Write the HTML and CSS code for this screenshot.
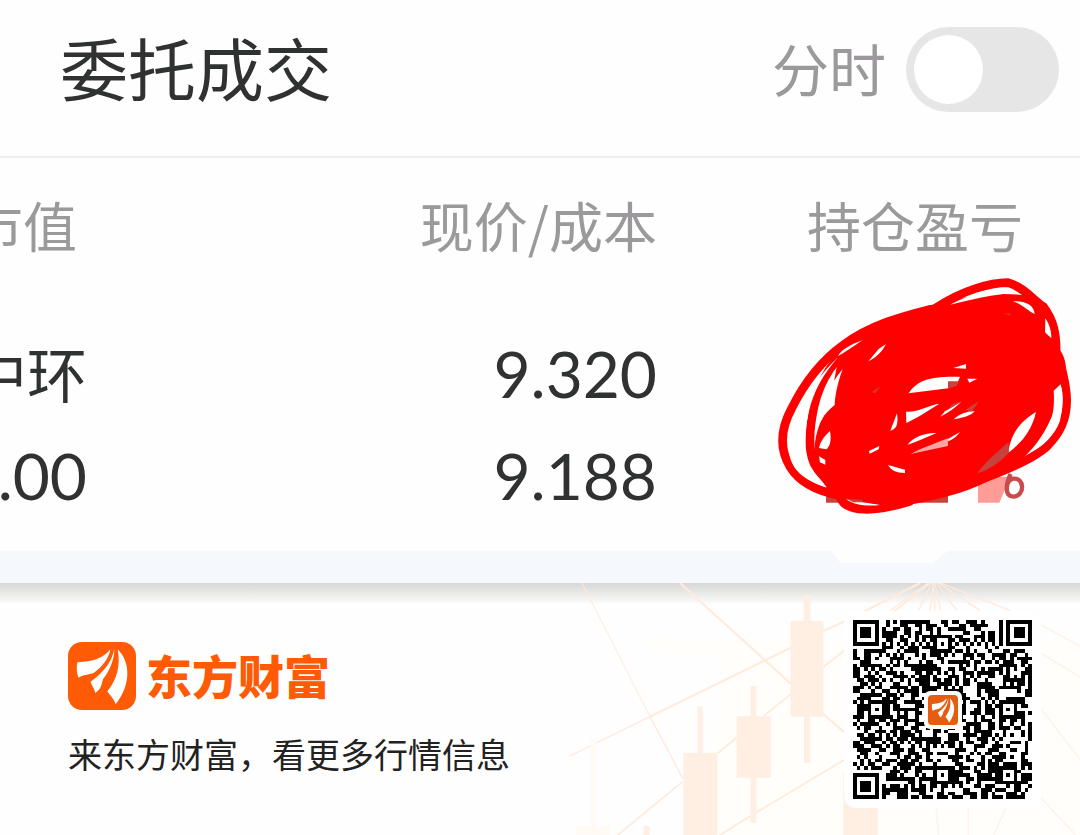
FILE: index.html
```
<!DOCTYPE html>
<html lang="zh-CN">
<head>
    <meta charset="UTF-8">
    <meta name="viewport" content="width=device-width, initial-scale=1">
    <title>委托成交</title>
    <link rel="stylesheet" href="styles.css">
</head>
<body>

    <header class="topbar">
        <h1>委托成交</h1>
        <label class="switch">
            <span>分时</span>
            <input type="checkbox">
        </label>
    </header>

    <main class="holdings">
        <table>
            <colgroup>
                <col class="col-value">
                <col class="col-price">
                <col>
            </colgroup>
            <thead>
                <tr><th>市值</th><th>现价/成本</th><th>持仓盈亏</th></tr>
            </thead>
            <tbody>
                <tr><td>中环</td><td class="num">9.320</td><td></td></tr>
                <tr><td class="num">.00</td><td class="num">9.188</td><td></td></tr>
            </tbody>
        </table>

        <svg class="scribble" viewBox="0 0 930 750" aria-hidden="true">
            <path fill="#c8413c" d="M168 640H534V698H168Z"/>
            <path fill="#ff9c96" d="M624 620H722L688 698H624Z"/>
            <path fill="none" stroke="#c84a4a" stroke-width="13" d="M722 612C708 640 702 680 730 680C766 678 764 622 730 626C716 628 712 640 710 652"/>
            <path fill="#f00" d="M205 270C260 190 340 150 480 106C580 80 680 60 790 80C850 120 865 180 870 240C890 270 888 290 885 320C860 400 850 450 800 520C760 570 720 600 650 636C580 670 500 690 420 704C340 735 260 735 210 700C150 640 110 560 150 460C190 390 190 330 205 270Z"/>
            <g class="stroke">
                <path d="M480 118C400 138 300 165 220 225C150 275 100 345 65 415C30 480 30 540 60 590C90 640 150 665 210 676"/>
                <path d="M290 190C190 260 150 330 132 410C115 490 115 540 132 580C165 640 220 690 280 700"/>
                <path d="M500 112C580 60 660 38 714 38C760 50 790 90 820 110C850 150 860 190 858 250"/>
                <path d="M872 280C880 320 890 350 890 390C890 450 870 490 830 530C790 565 730 590 650 622"/>
                <path d="M215 690C235 725 310 728 420 694"/>
            </g>
            <g fill="#fff">
                <path d="M540 104C610 68 665 53 706 53L743 69C665 72 610 88 540 104Z"/>
                <path d="M728 94C765 92 792 104 794 132C776 125 757 102 728 94Z"/>
                <path d="M826 145C840 165 844 187 844 205L825 187Z"/>
                <path d="M278 210C238 225 213 240 204 258C220 250 252 228 278 210Z"/>
                <path d="M218 297C170 355 148 420 137 476C155 443 175 420 194 405C196 365 207 328 218 297Z"/>
                <path d="M204 262C120 340 55 465 56 540C62 600 100 630 170 652C145 618 112 590 107 565C104 470 108 370 204 262Z"/>
                <path d="M180 483C158 503 150 520 147 534L170 538C182 524 184 508 180 483Z"/>
                <path d="M147 559L166 570V584L150 577Z"/>
                <path d="M348 222L326 237L295 274C320 262 336 245 348 222Z"/>
                <path d="M550 294L588 282V296Z"/>
                <path d="M416 370C438 335 470 320 550 320H570L560 345L534 355Z"/>
                <path d="M592 326H622L598 338Z"/>
                <path d="M408 425C440 428 485 403 508 401C477 420 442 444 409 459Z"/>
                <path d="M574 395L525 424L511 440C535 428 556 413 574 395Z"/>
                <path d="M614 424C594 423 568 431 551 448C578 444 603 437 614 424Z"/>
                <path d="M381 430L361 482C377 478 386 468 381 430Z"/>
                <path d="M500 489C460 488 426 505 413 524C440 515 472 501 500 489Z"/>
                <path d="M570 486L534 507L500 520C530 518 553 510 570 486Z"/>
                <path d="M297 543L328 528L326 538L299 551Z"/>
                <path d="M354 585L405 599V609C378 609 363 601 354 585Z"/>
                <path d="M798 426C757 450 722 487 715 548C757 517 786 479 798 426Z"/>
                <path d="M851 362L872 343C882 380 880 410 869 455C855 492 820 530 786 544C828 500 858 448 851 362Z"/>
                <path d="M228 686C248 704 290 710 330 705C300 698 265 697 228 686Z"/>
            </g>
            <g fill="#c8413c">
                <path d="M534 334H567L560 345L534 356Z"/>
                <path d="M628 392L606 424L585 421Z"/>
                <path d="M574 394L548 402L532 420Z"/>
                <path d="M716 516V548C690 578 655 600 622 610C650 570 684 545 716 516Z"/>
                <path d="M332 348L306 366L315 370Z"/>
                <path d="M700 130L722 132V137Z"/>
                <path d="M228 686L278 690V697H250Z"/>
            </g>
            <path fill="#ffa4a0" d="M534 505V528L422 552C450 536 492 522 534 505Z"/>
        </svg>
    </main>

    <div class="divider"></div>

    <footer class="share">
        <svg class="chart" viewBox="0 36 1530 759" aria-hidden="true">
            <path fill="#fffefa" d="M240 195L455 210H1530V795H440V450L130 540L450 440V262L240 245Z"/>
            <g fill="none" stroke="#ffeadc" stroke-width="6">
                <path stroke-width="3" d="M36 36L130 220L240 437"/>
                <path stroke-width="4" d="M240 437L338 622"/>
                <path d="M330 36L585 268L662 338M760 430L825 485"/>
                <path stroke-width="4" d="M0 555L240 437"/>
                <path d="M240 437L585 268L662 230M760 180L830 148L1050 36"/>
                <path stroke-width="5" d="M140 795L338 632M442 548L500 500M580 436L662 370M760 288L1080 36"/>
                <path stroke-width="5" d="M445 795L550 730L830 562"/>
                <path stroke-width="4" d="M1075 36L962 118M1085 36L1046 118M1090 36L1080 118M1090 36L1095 118M1095 36L1112 118M1100 36L1160 118M1105 36L1230 118M1110 36L1320 118"/>
                <path stroke-width="5" stroke="#fff3ea" d="M1410 160L1530 226M1410 245L1530 318M1410 410L1530 565M1412 680L1520 795M1098 705L1106 795M1195 705V795M1310 705L1270 795"/>
            </g>
            <g fill="#ffeee2">
                <path d="M701 72H721V150H760V437H720V575H702V437H662V150H701Z"/>
                <path d="M542 345H559V436H602V620H559V755H542V620H500V436H542Z"/>
                <path d="M383 406H398V545H442V795H340V545H383Z"/>
                <path d="M221 765H239V795H221ZM820 600H924V795H820Z"/>
            </g>
            <path fill="#fffaf3" d="M62 505H78V766H118V795H20V766H62Z"/>
        </svg>

        <div class="brand">
            <div class="brand-line">
                <svg class="logo" viewBox="0 0 204 204" aria-hidden="true">
                    <rect width="204" height="204" rx="42" fill="#ff5a05"/>
                    <g id="feather" fill="#fff">
                        <path d="M28 61C75 59 108 48 127 22C125 45 103 75 78 92C62 99 45 97 31 107C26 90 25 76 28 61Z"/>
                        <path d="M139 20C139 48 130 78 105 112C100 128 101 140 82 153C79 137 70 130 68 119C105 90 130 65 139 20Z"/>
                        <path d="M149 22C188 60 190 128 143 187C137 168 123 157 118 148C148 112 158 69 149 22Z"/>
                    </g>
                </svg>
                <strong>东方财富</strong>
            </div>
            <p>来东方财富，看更多行情信息</p>
        </div>

        <div class="qr">
            <svg id="qrcode" viewBox="0 0 49 49" shape-rendering="crispEdges" role="img" aria-label="二维码"></svg>
            <svg class="qr-logo" viewBox="0 0 204 204" aria-hidden="true">
                <rect width="204" height="204" rx="28" fill="#e65c10"/>
                <use href="#feather"/>
            </svg>
        </div>
    </footer>

<script src="script.js"></script>
</body>
</html>
```
FILE: styles.css
```
* {
    box-sizing: border-box;
}
body {
    margin: 0;
    min-height: 100vh;
    display: flex;
    flex-direction: column;
    background: #fefefe;
    color: #303231;
    font-family: "Noto Sans CJK SC", sans-serif;
    overflow-x: hidden;
}
.topbar {
    display: flex;
    align-items: flex-start;
    justify-content: space-between;
    padding: 27px 21px 44px 60px;
    border-bottom: 2px solid #f3ebed;
}
h1 {
    margin: 0;
    font-size: 68px;
    font-weight: 400;
    line-height: 80px;
}
.switch {
    display: flex;
    align-items: flex-start;
    gap: 20px;
    color: #9b999b;
    font-size: 57px;
    line-height: 80px;
}
.switch input {
    appearance: none;
    width: 153px;
    height: 85px;
    margin: 0;
    padding: 8px;
    border-radius: 43px;
    background: #e6e6e7;
}
.switch input::before {
    content: "";
    display: block;
    width: 69px;
    height: 69px;
    border-radius: 50%;
    background: #fff;
}
.switch input:checked::before {
    margin-left: auto;
}

/* table is scrolled sideways, the first column is partly off screen */
.holdings {
    position: relative;
    overflow: hidden;
    padding-bottom: 24px;
}
table {
    width: calc(100% + 60px);
    margin-left: -60px;
    table-layout: fixed;
    border-collapse: collapse;
}
.col-value {
    width: 147px;
}
.col-price {
    width: 50%;
}
th, td {
    padding: 0;
    text-align: right;
    white-space: nowrap;
    font-weight: 400;
}
th {
    height: 163px;
    padding-bottom: 29px;
    color: #9b999b;
    font-size: 54px;
    line-height: 80px;
}
th:first-child {
    padding-right: 10px;
}
th:last-child {
    padding-right: 57px;
}
td {
    font-size: 60px;
    line-height: 102px;
    vertical-align: baseline;
}
.num {
    font-family: Lato, "Noto Sans CJK SC", sans-serif;
    font-size: 64px;
}
.scribble {
    position: absolute;
    top: 112px;
    right: 0;
    width: 310px;
    height: 250px;
}
.scribble .stroke {
    fill: none;
    stroke: #f00;
    stroke-width: 26px;
    stroke-linecap: round;
}
.divider {
    height: 32px;
    background: #f5f9fe;
    border-top: 2px solid #f6f7f9;
    position: relative;
}
.divider::after {
    content: "";
    position: absolute;
    top: -2px;
    right: 132px;
    width: 117px;
    height: 12px;
    background: #fefefe;
    clip-path: polygon(0 0, 100% 0, 87% 100%, 8% 100%);
}

.share {
    position: relative;
    flex: 1;
    display: flex;
    align-items: center;
    justify-content: space-between;
    padding: 28px 39px 28px 68px;
    overflow: hidden;
}
.share::before {
    content: "";
    position: absolute;
    top: 0;
    left: 0;
    right: 0;
    height: 20px;
    background: linear-gradient(rgba(60, 60, 50, 0.2), rgba(60, 60, 50, 0.02));
}
.chart {
    position: absolute;
    top: 0;
    right: 0;
    width: 510px;
    height: 253px;
}
.brand, .qr {
    position: relative;
}
.brand-line {
    display: flex;
    align-items: flex-start;
    gap: 10px;
}
.logo {
    width: 68px;
    height: 68px;
}
.brand strong {
    color: #ff5a05;
    font-size: 46px;
    font-weight: 900;
    line-height: 64px;
}
.brand p {
    margin: 20px 0 0;
    color: #222;
    font-size: 34px;
    line-height: 48px;
}
.qr {
    display: grid;
    place-items: center;
    padding: 9px;
    border-radius: 12px;
    background: #fff;
}
#qrcode {
    display: block;
    width: 179px;
    height: 179px;
}
.qr-logo {
    position: absolute;
    width: 38px;
    height: 38px;
    padding: 4px;
    border-radius: 6px;
    background: #fff;
}
```
FILE: script.js
```
const SIZE = 49;
const aligns = [6, 24, 42];
let seed = 20318;

function random() {
    seed = (seed * 16807) % 2147483647;
    return seed / 2147483647;
}

// ring pattern: dark border, light ring, dark centre
function ring(x, y, cx, cy, r) {
    const d = Math.max(Math.abs(x - cx), Math.abs(y - cy));
    if (d > r) return null;
    return d !== r - 1;
}

function isDark(x, y) {
    const noise = random() < 0.54;
    for (const [cx, cy] of [[3, 3], [45, 3], [3, 45]]) {
        const d = Math.max(Math.abs(x - cx), Math.abs(y - cy));
        if (d <= 3) return d !== 2;
        if (d === 4) return false;
    }
    for (const cx of aligns) {
        for (const cy of aligns) {
            if ((cx === 6 && cy !== 24) || (cy === 6 && cx !== 24)) continue;
            const hit = ring(x, y, cx, cy, 2);
            if (hit !== null) return hit;
        }
    }
    if (x === 6 || y === 6) return (x + y) % 2 === 0;
    return noise;
}

let d = '';
for (let y = 0; y < SIZE; y++) {
    for (let x = 0; x < SIZE; x++) {
        if (isDark(x, y)) d += `M${x} ${y}h1v1h-1z`;
    }
}
const path = document.createElementNS('http://www.w3.org/2000/svg', 'path');
path.setAttribute('d', d);
document.getElementById('qrcode').appendChild(path);
```
